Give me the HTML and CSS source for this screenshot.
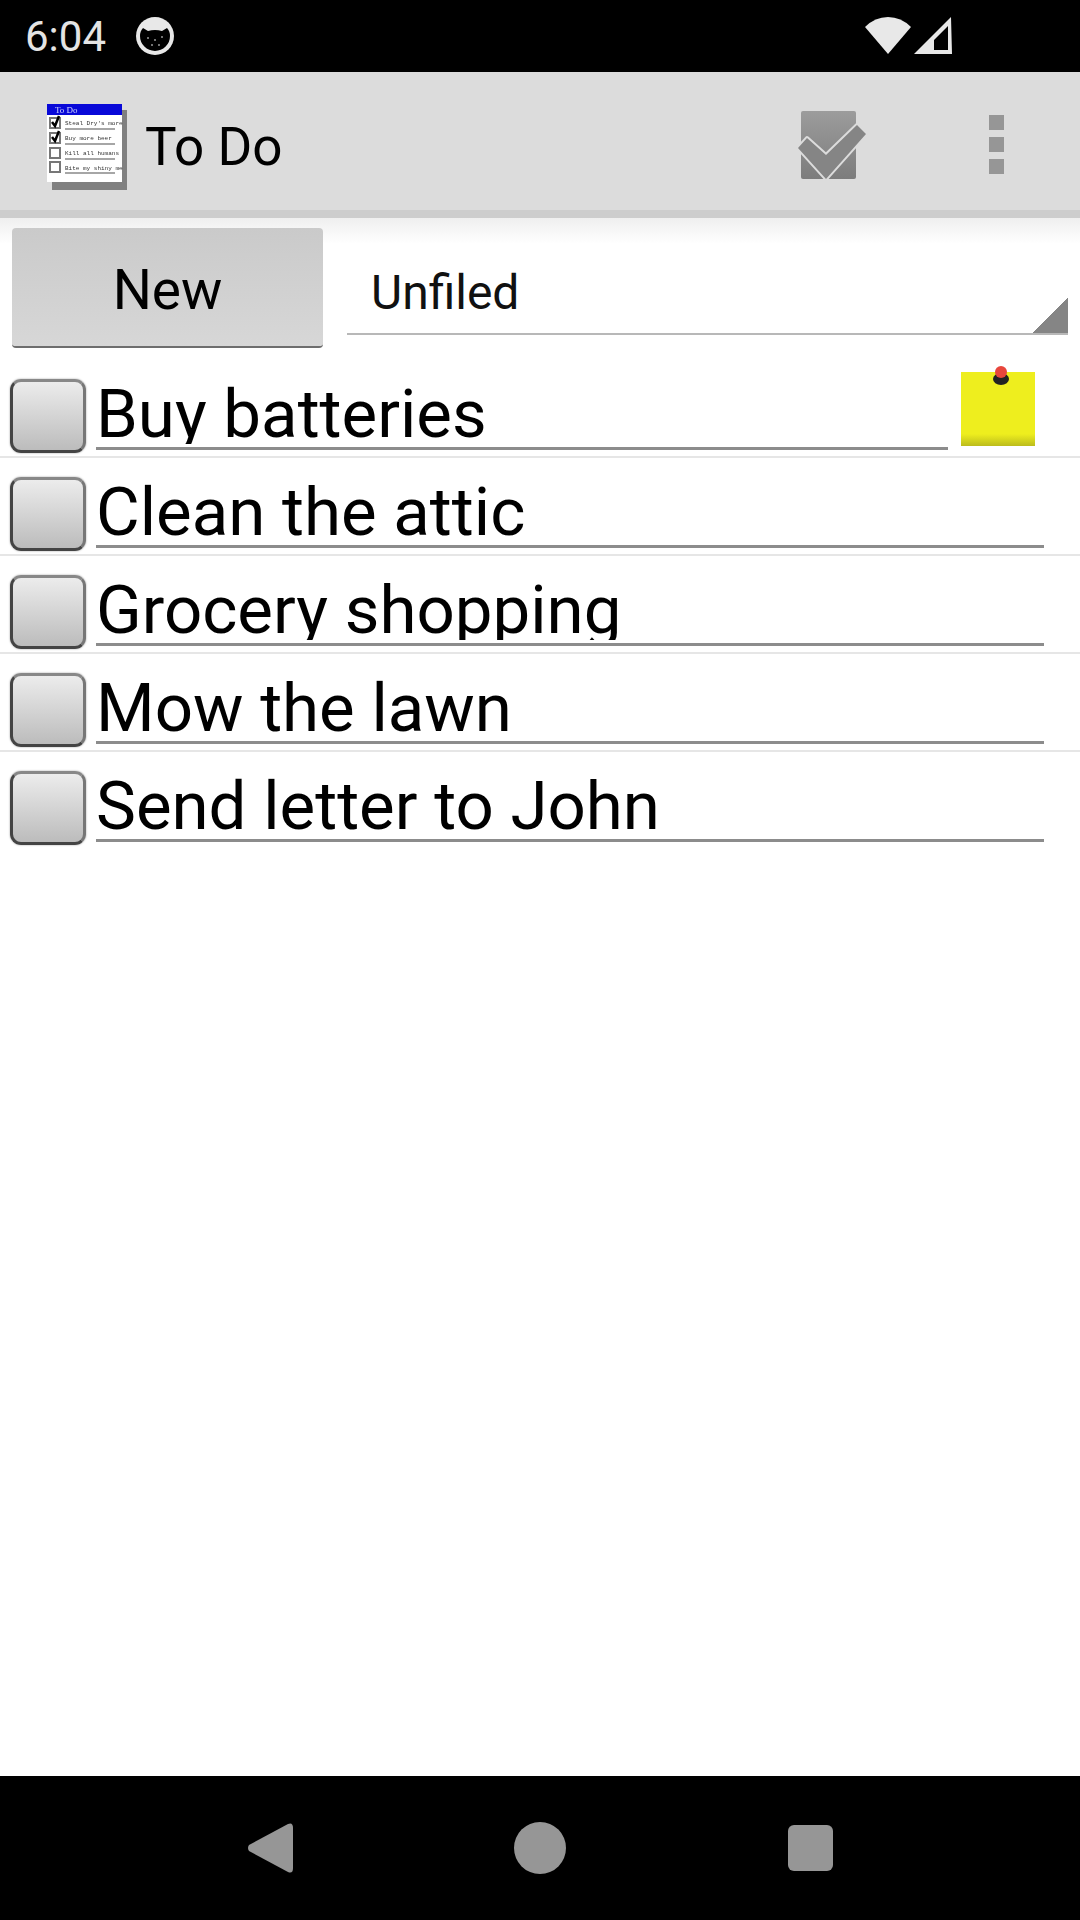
FILE: index.html
```html
<!DOCTYPE html>
<html lang="en">
<head>
  <meta charset="UTF-8">
  <meta name="viewport" content="width=device-width, initial-scale=1.0">
  <title>To Do</title>
  <link rel="stylesheet" href="styles.css">
</head>
<body>

<div class="status-bar">
  <span class="status-time">6:04</span>
  <svg class="status-cat" width="38" height="38" viewBox="0 0 38 38">
    <circle cx="19" cy="19" r="19" fill="#e8e8e8"/>
    <path d="M4 19 Q4 14 7 11 L12 14 Q19 12 26 14 L31 11 Q34 14 34 19 A15 15 0 0 1 4 19 Z" fill="#000"/>
    <circle cx="12" cy="21" r="1" fill="#999"/>
    <circle cx="19" cy="23" r="1" fill="#999"/>
    <circle cx="26" cy="20" r="1" fill="#999"/>
    <circle cx="16" cy="28" r="1" fill="#999"/>
    <circle cx="23" cy="28" r="1" fill="#999"/>
  </svg>
  <div class="status-right">
    <svg width="46" height="38" viewBox="0 0 46 38">
      <path d="M23 37 L0 10 Q10 0 23 0 Q36 0 46 10 Z" fill="#e8e8e8"/>
    </svg>
    <svg width="38" height="38" viewBox="0 0 38 38">
      <path d="M0 37 L37 0 L38 37 Z M20 33 L34 33 L34 9 L20 23 Z" fill="#e8e8e8" fill-rule="evenodd"/>
    </svg>
  </div>
</div>

<div class="app-bar">
  <svg class="app-logo" width="82" height="88" viewBox="0 0 82 88">
    <rect x="6" y="7" width="75" height="80" fill="#808080"/>
    <rect x="1" y="1" width="75" height="78" fill="#fff"/>
    <rect x="1" y="1" width="75" height="11" fill="#0808d8"/>
    <text x="9" y="10" class="logo-title">To Do</text>
    <g fill="none" stroke="#777" stroke-width="2">
      <rect x="4" y="15" width="10" height="10"/>
      <rect x="4" y="30" width="10" height="10"/>
      <rect x="4" y="45" width="10" height="10"/>
      <rect x="4" y="59" width="10" height="10"/>
    </g>
    <path d="M6 19 L9 23 L13 13 M6 34 L9 38 L13 28" fill="none" stroke="#000" stroke-width="2.5"/>
    <text x="19" y="22" class="logo-line">Steal Dry's more</text>
    <text x="19" y="37" class="logo-line">Buy more beer</text>
    <text x="19" y="52" class="logo-line">Kill all humans</text>
    <text x="19" y="67" class="logo-line">Bite my shiny me</text>
    <g stroke="#888" stroke-width="1.5">
      <path d="M19 26 H69"/>
      <path d="M19 41 H69"/>
      <path d="M19 56 H69"/>
      <path d="M19 70 H69"/>
    </g>
  </svg>
  <span class="app-title">To Do</span>
  <svg class="app-check" width="76" height="76" viewBox="0 0 76 76">
    <defs>
      <linearGradient id="checkBox" x1="0" y1="0" x2="0" y2="1">
        <stop offset="0" stop-color="#9c9c9c"/>
        <stop offset="1" stop-color="#7c7c7c"/>
      </linearGradient>
    </defs>
    <rect x="6" y="5" width="55" height="68" rx="2" fill="url(#checkBox)"/>
    <path d="M3 42 L12 32 L31 49 L62 19 L71 28 L31 73 Z" fill="#858585" stroke="#dcdcdc" stroke-width="4" stroke-linejoin="round" paint-order="stroke"/>
  </svg>
  <div class="app-menu">
    <span class="menu-dot"></span>
    <span class="menu-dot"></span>
    <span class="menu-dot"></span>
  </div>
</div>

<div class="controls">
  <button class="new-button" type="button">New</button>
  <div class="category-select">Unfiled</div>
</div>

<div class="task-list">
  <div class="task-row">
    <div class="task-check"></div>
    <div class="task-field"><div class="task-text">Buy batteries</div></div>
    <svg class="task-note" width="76" height="92" viewBox="0 0 76 92">
      <defs>
        <linearGradient id="noteEdge" x1="0" y1="0" x2="0" y2="1">
          <stop offset="0" stop-color="#eeee1e"/>
          <stop offset="1" stop-color="#bcbc1c"/>
        </linearGradient>
      </defs>
      <rect x="1" y="18" width="74" height="74" fill="#eeee1e"/>
      <rect x="1" y="80" width="74" height="12" fill="url(#noteEdge)"/>
      <ellipse cx="41" cy="25" rx="8" ry="6" fill="#222"/>
      <circle cx="41" cy="18" r="6" fill="#e8463c"/>
    </svg>
  </div>
  <div class="task-row">
    <div class="task-check"></div>
    <div class="task-field"><div class="task-text">Clean the attic</div></div>
  </div>
  <div class="task-row">
    <div class="task-check"></div>
    <div class="task-field"><div class="task-text">Grocery shopping</div></div>
  </div>
  <div class="task-row">
    <div class="task-check"></div>
    <div class="task-field"><div class="task-text">Mow the lawn</div></div>
  </div>
  <div class="task-row">
    <div class="task-check"></div>
    <div class="task-field"><div class="task-text">Send letter to John</div></div>
  </div>
</div>

<div class="nav-bar">
  <svg width="46" height="50" viewBox="0 0 46 50">
    <path d="M41 1 Q46 -1 46 5 V45 Q46 51 41 49 L2 28 Q0 25 2 22 Z" fill="#969696"/>
  </svg>
  <span class="nav-home"></span>
  <span class="nav-recent"></span>
</div>

</body>
</html>
```
FILE: styles.css
```css
body {
  font-family: Roboto, sans-serif;
  margin: 0;
  padding: 0;
  width: 1080px;
  height: 1920px;
  display: flex;
  flex-direction: column;
  background-color: #ffffff;
  overflow: hidden;
}

/* Status bar */
.status-bar {
  height: 72px;
  background-color: #000000;
  display: flex;
  align-items: center;
  padding-left: 25px;
  flex-shrink: 0;
}

.status-time {
  color: #e4e4e4;
  font-size: 42px;
  width: 111px;
}

.status-right {
  margin-left: auto;
  margin-right: 128px;
  display: flex;
  gap: 3px;
}

/* App bar */
.app-bar {
  height: 138px;
  background-color: #dcdcdc;
  border-bottom: 8px solid #cdcdcd;
  display: flex;
  align-items: center;
  padding-left: 46px;
  flex-shrink: 0;
}

.app-logo {
  margin-top: 12px;
  filter: blur(0.5px);
}

.logo-title {
  font-family: "Liberation Serif", serif;
  font-size: 9px;
  fill: #cfd4ff;
}

.logo-line {
  font-family: "Liberation Mono", monospace;
  font-size: 6px;
  fill: #333333;
}

.app-title {
  font-size: 53px;
  color: #000000;
  margin-left: 17px;
  margin-top: 12px;
}

.app-check {
  margin-left: 513px;
  margin-top: 6px;
}

.app-menu {
  margin-left: 118px;
  margin-top: 6px;
  display: flex;
  flex-direction: column;
  gap: 7px;
}

.menu-dot {
  display: block;
  width: 15px;
  height: 15px;
  background-color: #969696;
}

/* New button and category */
.controls {
  display: flex;
  padding: 10px 12px 12px;
  gap: 24px;
  background: linear-gradient(#efefef, #ffffff 26px);
  flex-shrink: 0;
}

.new-button {
  width: 311px;
  height: 120px;
  border: none;
  border-bottom: 2px solid #6e6e6e;
  border-radius: 4px;
  background: linear-gradient(#cacaca, #d7d7d7);
  font-family: Roboto, sans-serif;
  font-size: 55px;
  color: #000000;
  padding: 6px 0 0;
}

.category-select {
  position: relative;
  flex: 1;
  height: 107px;
  box-sizing: border-box;
  border-bottom: 2px solid #b8b8b8;
  font-size: 48px;
  line-height: 105px;
  color: #111111;
  padding: 12px 0 0 24px;
}

.category-select::after {
  content: "";
  position: absolute;
  right: 0;
  bottom: 0;
  width: 36px;
  height: 36px;
  background: linear-gradient(to bottom right, transparent 50%, #858585 50%);
}

/* Task rows */
.task-row {
  height: 96px;
  border-bottom: 2px solid #e6e6e6;
  display: flex;
  padding-left: 10px;
}

.task-row:last-child {
  border-bottom: none;
}

.task-check {
  width: 76px;
  height: 74px;
  box-sizing: border-box;
  margin-top: 19px;
  border: 3px solid;
  border-color: #888888 #777777 #444444 #444444;
  border-radius: 11px;
  background: linear-gradient(#ececec, #bcbcbc);
  box-shadow: 0 0 2px #999999;
}

.task-field {
  flex: 1;
  height: 90px;
  box-sizing: border-box;
  margin: 0 36px 0 10px;
  padding-bottom: 3px;
  border-bottom: 3px solid #8c8c8c;
}

.task-text {
  height: 84px;
  line-height: 108px;
  font-size: 67.2px;
  color: #000000;
  overflow: hidden;
  white-space: nowrap;
}

.task-row:first-child .task-field {
  margin-right: 12px;
}

.task-note {
  margin-right: 44px;
  margin-top: -6px;
}

.task-list {
  flex: 1;
}

/* Bottom navigation */
.nav-bar {
  height: 144px;
  background-color: #000000;
  display: flex;
  align-items: center;
  padding-left: 247px;
  flex-shrink: 0;
}

.nav-home {
  width: 52px;
  height: 52px;
  border-radius: 50%;
  background-color: #969696;
  margin-left: 221px;
}

.nav-recent {
  width: 45px;
  height: 46px;
  border-radius: 6px;
  background-color: #969696;
  margin-left: 222px;
}
```
